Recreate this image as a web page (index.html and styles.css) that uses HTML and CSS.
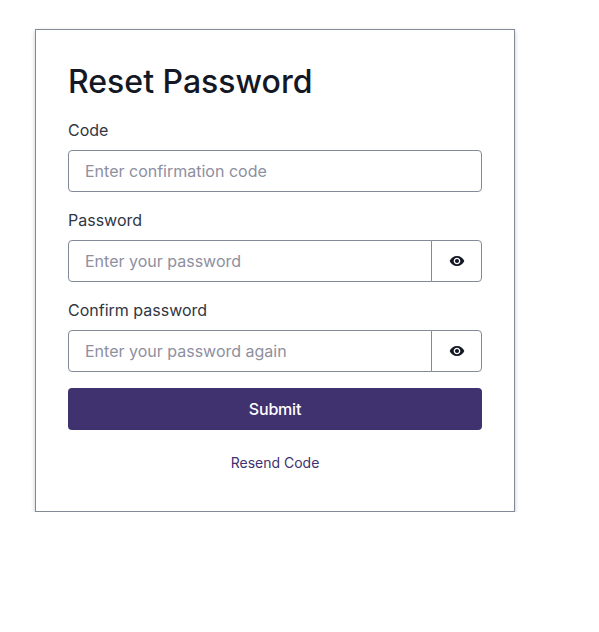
FILE: index.html
```html
<!DOCTYPE html>
<html lang="en">
<head>
  <meta charset="UTF-8">
  <title>Reset Password</title>
  <link rel="stylesheet" href="styles.css">
</head>
<body>
  <form class="card">
    <h3 class="title">Reset Password</h3>

    <div class="field">
      <label for="code">Code</label>
      <input class="input" type="text" id="code" placeholder="Enter confirmation code">
    </div>

    <div class="field">
      <label for="password">Password</label>
      <div class="group">
        <input class="input" type="password" id="password" placeholder="Enter your password">
        <button class="eye" type="button" aria-label="Show password">
          <svg viewBox="0 0 24 24" width="16" height="16"><path d="M12 4.5C7 4.5 2.73 7.61 1 12c1.73 4.39 6 7.5 11 7.5s9.27-3.11 11-7.5c-1.73-4.39-6-7.5-11-7.5zM12 17c-2.76 0-5-2.24-5-5s2.24-5 5-5 5 2.24 5 5-2.24 5-5 5zm0-8c-1.66 0-3 1.34-3 3s1.34 3 3 3 3-1.34 3-3-1.34-3-3-3z"/></svg>
        </button>
      </div>
    </div>

    <div class="field">
      <label for="confirm">Confirm password</label>
      <div class="group">
        <input class="input" type="password" id="confirm" placeholder="Enter your password again">
        <button class="eye" type="button" aria-label="Show password">
          <svg viewBox="0 0 24 24" width="16" height="16"><path d="M12 4.5C7 4.5 2.73 7.61 1 12c1.73 4.39 6 7.5 11 7.5s9.27-3.11 11-7.5c-1.73-4.39-6-7.5-11-7.5zM12 17c-2.76 0-5-2.24-5-5s2.24-5 5-5 5 2.24 5 5-2.24 5-5 5zm0-8c-1.66 0-3 1.34-3 3s1.34 3 3 3 3-1.34 3-3-1.34-3-3-3z"/></svg>
        </button>
      </div>
    </div>

    <button class="submit" type="submit">Submit</button>
    <button class="resend" type="button">Resend Code</button>
  </form>
</body>
</html>
```

FILE: styles.css
```css
body {
  margin: 0;
  background: #fff;
  color: #141824;
  font-family: Inter, "Liberation Sans", sans-serif;
  font-size: 16px;
  line-height: 24px;
}
.card {
  box-sizing: border-box;
  width: 480px;
  margin: 29px 0 0 35px;
  padding: 32px;
  display: flex;
  flex-direction: column;
  gap: 16px;
  background: #fff;
  border: 1px solid #828a98;
  box-shadow: 0 2px 4px rgba(13, 26, 38, 0.25);
}
.title {
  margin: 0;
  font-size: 32px;
  font-weight: 500;
  line-height: 40px;
}
.field {
  display: flex;
  flex-direction: column;
  gap: 8px;
}
label {
  color: #303644;
}
.input {
  box-sizing: border-box;
  width: 100%;
  height: 42px;
  padding: 8px 16px;
  border: 1px solid #828a98;
  border-radius: 4px;
  background: #fff;
  color: #141824;
  font: inherit;
}
.input::placeholder {
  color: #8e8f9f;
  opacity: 1;
}
.group {
  display: flex;
}
.group .input {
  flex: 1;
  min-width: 0;
  border-radius: 4px 0 0 4px;
}
.eye {
  box-sizing: border-box;
  width: 51px;
  height: 42px;
  margin-left: -1px;
  display: flex;
  align-items: center;
  justify-content: center;
  padding: 0;
  background: #fff;
  border: 1px solid #828a98;
  border-radius: 0 4px 4px 0;
}
.eye svg {
  fill: #141824;
}
.submit {
  height: 42px;
  border: 0;
  border-radius: 4px;
  background: #40316f;
  color: #fff;
  font: inherit;
  font-weight: 500;
  letter-spacing: -0.2px;
}
.resend {
  height: 33px;
  padding: 0;
  border: 0;
  background: none;
  color: #40316f;
  font: inherit;
  font-size: 14px;
}
```
